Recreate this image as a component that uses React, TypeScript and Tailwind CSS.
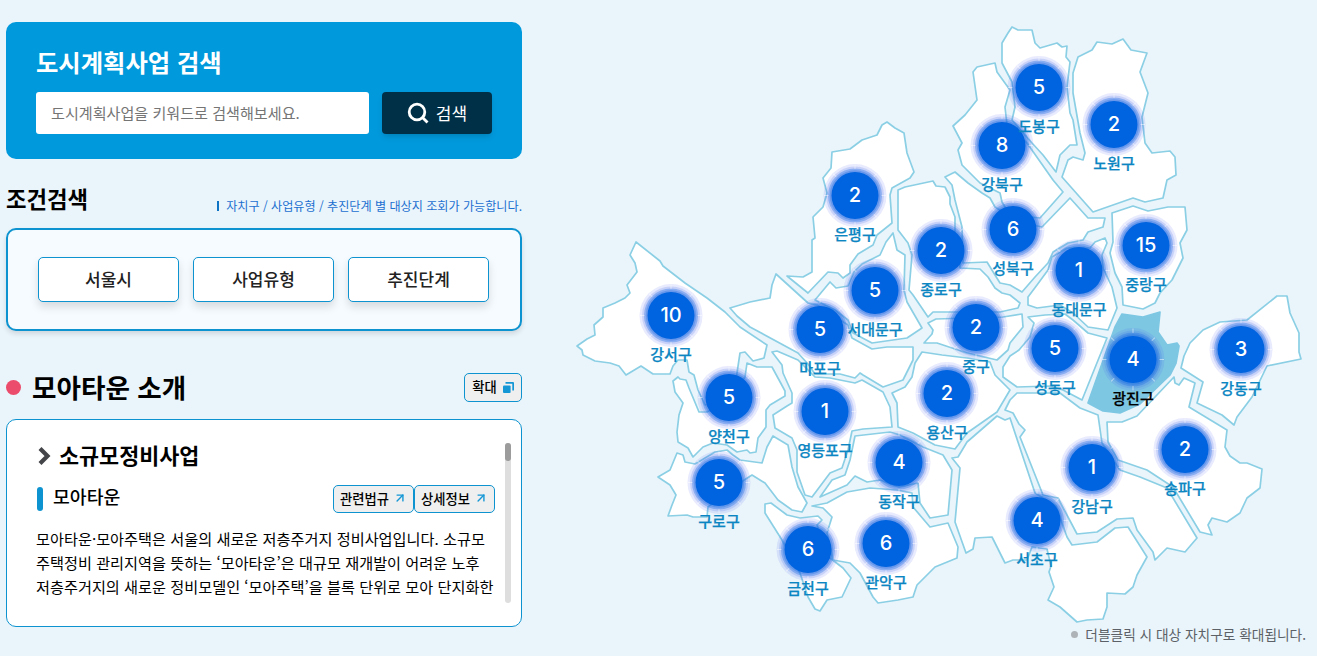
import { ArrowUpRight } from 'lucide-react'

interface District {
  name: string
  count: number
  x: number
  y: number
  points: string
  active?: boolean
}

const districts: District[] = [
  { name: '강서구', count: 10, x: 671, y: 315, points: '636,242 660,261 663,266 685,283 707,298 725,312 740,327 767,345 764,358 753,361 745,352 740,353 737,373 735,385 720,400 705,405 698,390 694,375 689,372 687,360 678,360 673,366 670,374 653,374 641,366 626,375 619,366 610,363 595,361 583,355 582,350 577,346 587,339 595,335 594,325 603,317 603,308 615,303 625,298 630,293 627,285 637,272 635,263 630,255' },
  { name: '양천구', count: 5, x: 729, y: 397, points: '673,381 678,377 680,379 686,380 689,388 699,412 707,412 730,400 745,377 747,363 757,367 772,367 785,391 785,396 770,405 766,410 766,427 758,438 756,452 750,453 747,450 737,452 727,445 713,443 703,447 693,457 688,448 678,442 677,432 679,415 683,403 675,392' },
  { name: '구로구', count: 5, x: 719, y: 482, points: '677,453 683,455 685,462 695,464 705,458 715,452 727,450 733,455 740,460 762,463 767,447 773,436 788,445 792,467 798,487 807,503 802,512 792,510 778,500 765,483 752,475 735,486 708,507 707,517 693,517 687,515 668,516 672,505 676,495 670,485 658,477 670,470' },
  { name: '영등포구', count: 1, x: 825, y: 411, points: '772,352 777,351 798,360 808,370 815,377 830,378 855,383 862,380 883,392 890,407 892,427 863,429 852,431 848,450 842,468 830,473 812,497 805,495 797,472 797,450 792,438 775,428 773,415 787,406 792,403 792,393 783,373 782,365' },
  { name: '마포구', count: 5, x: 820, y: 329, points: '730,308 750,302 770,298 772,285 776,274 808,303 817,305 848,325 852,338 872,349 887,347 913,347 913,360 903,380 883,387 863,375 860,373 855,378 840,374 815,374 808,364 798,353 750,327 737,316' },
  { name: '서대문구', count: 5, x: 875, y: 290, points: '815,300 830,282 836,288 848,286 854,272 862,264 880,255 886,242 893,233 897,250 905,255 904,290 907,302 922,328 907,338 872,343 853,333 848,320 835,310' },
  { name: '은평구', count: 2, x: 855, y: 195, points: '882,125 887,122 895,128 904,133 907,153 914,172 910,178 892,188 890,195 892,223 877,235 873,245 858,254 850,265 850,273 843,278 838,273 828,272 808,293 787,276 803,277 812,272 812,240 815,238 813,217 823,207 827,193 823,178 831,168 832,152 850,149 862,140 877,135' },
  { name: '종로구', count: 2, x: 941, y: 250, points: '898,190 905,187 933,181 936,186 945,187 950,197 950,204 955,217 955,233 959,250 960,268 980,269 988,277 995,288 1002,293 1010,295 1020,303 1018,308 1000,312 953,312 933,312 928,317 913,295 909,290 912,255 908,243 898,230' },
  { name: '중구', count: 2, x: 976, y: 327, points: '933,330 928,323 936,319 1003,317 1022,314 1023,327 1010,343 1008,350 997,360 967,353 943,345 937,343 924,343 932,334' },
  { name: '용산구', count: 2, x: 947, y: 393, points: '922,352 942,355 967,358 990,362 995,375 1010,390 997,412 967,433 955,449 935,445 913,433 898,427 897,403 892,393 905,387 912,377 915,363' },
  { name: '성동구', count: 5, x: 1055, y: 348, points: '1028,317 1045,315 1065,314 1073,320 1088,333 1107,338 1082,400 1063,390 1050,386 1017,387 1003,377 1003,367 1010,356 1019,350 1030,337 1034,323' },
  { name: '동대문구', count: 1, x: 1079, y: 270, points: '1028,297 1037,285 1048,270 1052,257 1067,248 1090,248 1095,242 1105,238 1107,243 1102,255 1103,268 1112,287 1117,308 1108,330 1088,327 1073,313 1060,305 1037,308 1028,305' },
  { name: '성북구', count: 6, x: 1013, y: 229, points: '945,177 955,172 968,183 982,193 990,198 995,207 1018,222 1042,227 1070,198 1088,218 1105,218 1103,227 1088,232 1083,240 1068,243 1053,252 1048,263 1035,277 1022,292 1010,285 1000,283 995,275 987,262 963,263 962,227 955,200 952,185' },
  { name: '강북구', count: 8, x: 1002, y: 145, points: '977,67 995,63 997,72 1010,90 1005,107 1007,125 1027,143 1053,180 1063,192 1040,218 1010,215 1002,202 1000,193 980,183 962,165 958,150 962,143 953,126 965,115 977,100 973,72' },
  { name: '도봉구', count: 5, x: 1039, y: 87, points: '1012,27 1018,30 1032,30 1035,43 1040,48 1057,43 1062,47 1067,46 1066,57 1070,62 1067,87 1070,113 1073,120 1077,145 1070,145 1060,155 1056,172 1043,155 1032,143 1012,120 1015,107 1012,82 1002,63 1002,43 1008,33' },
  { name: '노원구', count: 2, x: 1114, y: 124, points: '1097,42 1112,44 1123,39 1131,50 1147,53 1140,72 1148,93 1142,117 1145,143 1152,153 1170,151 1175,157 1176,175 1167,180 1163,198 1145,202 1133,198 1093,212 1062,177 1068,160 1073,157 1083,160 1085,153 1080,133 1073,93 1073,73 1078,57 1092,50' },
  { name: '중랑구', count: 15, x: 1146, y: 245, points: '1112,213 1133,206 1148,211 1168,207 1185,207 1187,230 1180,243 1183,258 1172,280 1160,293 1155,303 1143,309 1123,305 1122,287 1115,273 1110,253 1113,242' },
  { name: '광진구', count: 4, x: 1133, y: 359, active: true, points: '1122,314 1143,317 1160,312 1158,332 1167,345 1177,343 1179,346 1176,363 1170,375 1140,404 1120,413 1103,411 1088,403 1115,327' },
  { name: '강동구', count: 3, x: 1241, y: 349, points: '1277,296 1287,296 1290,313 1299,333 1299,352 1301,359 1267,366 1252,397 1237,417 1234,425 1222,415 1197,403 1203,382 1181,368 1184,356 1190,343 1203,330 1220,322 1247,320' },
  { name: '송파구', count: 2, x: 1185, y: 449, points: '1174,377 1175,383 1179,385 1184,378 1195,383 1189,407 1227,430 1225,447 1230,456 1240,463 1247,463 1262,469 1260,488 1247,498 1240,513 1227,522 1212,518 1208,525 1212,535 1200,532 1173,487 1147,470 1118,460 1108,442 1107,422 1122,422 1137,416' },
  { name: '강남구', count: 1, x: 1092, y: 467, points: '1017,393 1060,393 1080,408 1098,415 1102,443 1120,470 1140,477 1167,488 1197,538 1185,552 1167,548 1155,560 1153,552 1137,530 1133,518 1117,519 1097,532 1077,534 1068,517 1058,498 1043,495 1020,437 1025,430 1019,424 1013,413 1005,410 1010,400' },
  { name: '서초구', count: 4, x: 1037, y: 520, points: '997,416 1005,420 1010,418 1035,493 1056,506 1067,537 1072,545 1097,542 1115,528 1128,527 1147,557 1137,575 1133,587 1125,594 1107,593 1107,607 1103,619 1087,620 1077,622 1060,607 1048,600 1054,587 1049,572 1051,566 1047,549 1032,547 1027,560 1013,560 1005,563 992,537 975,538 973,549 966,553 955,522 960,468 952,458 958,457 967,442' },
  { name: '동작구', count: 4, x: 899, y: 462, points: '855,436 890,432 900,435 923,447 943,455 952,470 948,515 930,518 920,503 918,483 899,487 880,480 867,482 855,476 847,485 820,497 832,480 845,475 850,460' },
  { name: '관악구', count: 6, x: 886, y: 543, points: '812,506 827,503 847,492 870,488 897,490 912,493 913,507 930,527 948,523 958,547 957,558 935,567 917,585 913,597 898,600 878,603 873,597 860,573 850,563 833,560 827,533 832,517 823,508' },
  { name: '금천구', count: 6, x: 808, y: 549, points: '765,504 771,503 787,515 800,518 818,516 822,520 817,525 830,558 843,568 851,578 842,597 827,600 820,611 815,609 808,597 800,573 782,540 765,513' },
]

const ticks = [0, 45, 90, 135, 180, 225, 270, 315]

function SeoulMap() {
  return (
    <svg viewBox="0 0 795 656" className="absolute inset-0 h-full w-full">
      <g transform="translate(-522 0)">
        {districts.map((d) => (
          <polygon
            key={d.name}
            points={d.points}
            fill={d.active ? '#7dc7e3' : '#ffffff'}
            stroke={d.active ? '#7dc7e3' : '#8bcfe5'}
            strokeWidth="1.7"
            strokeLinejoin="round"
          />
        ))}
        {districts.map((d) => (
          <g key={d.name} transform={`translate(${d.x} ${d.y + 0.5})`}>
            <circle r="31.5" fill="#4a5ff0" fillOpacity="0.13" />
            <circle r="29" fill="#3a6cea" fillOpacity="0.18" />
            <circle r="27" fill="#1f6ce2" fillOpacity="0.36" />
            <circle r="25.2" fill="#1268e0" fillOpacity="0.3" />
            {ticks.map((angle) => (
              <path key={angle} d="M0 -31V-26.5" stroke="#fff" strokeOpacity="0.5" strokeWidth="1" transform={`rotate(${angle})`} />
            ))}
            <circle r="23.5" fill="#0063df" />
          </g>
        ))}
      </g>
    </svg>
  )
}

function DistrictMarker({ district }: { district: District }) {
  return (
    <div
      className="absolute flex w-20 -translate-x-1/2 flex-col items-center"
      style={{ left: district.x - 522, top: district.y - 14 }}
    >
      <span className="font-['Inter','Noto_Sans_CJK_KR',sans-serif] text-[20px] leading-7 font-medium text-white">
        {district.count}
      </span>
      <span
        className={`mt-[14px] text-[15px] leading-[22px] font-medium whitespace-nowrap [-webkit-text-stroke:0.25px_currentColor] ${district.active ? 'text-black' : 'text-[#0c86c2]'}`}
      >
        {district.name}
      </span>
    </div>
  )
}

function LinkButton({ label }: { label: string }) {
  return (
    <button className="flex h-7 w-[81px] items-center justify-between rounded-[5px] border border-[#0d93cf] bg-[#efefef] pr-1.5 pl-1.5 text-[13.3px] font-medium whitespace-nowrap text-black">
      {label}
      <ArrowUpRight className="mb-0.5 size-3.5 text-[#1597d5]" strokeWidth={2.4} />
    </button>
  )
}

export default function App() {
  return (
    <div lang="ko" className="flex h-[656px] w-[1317px] overflow-hidden bg-[#eaf5fb] font-['Noto_Sans_CJK_KR',sans-serif] text-black">
      <div className="flex w-[522px] flex-col pt-[22px] pl-1.5">
        <section className="h-[137px] rounded-[10px] bg-[#0099dc] px-[30px] pt-[22px]">
          <h2 className="text-[24.3px] leading-9 font-bold text-white">도시계획사업 검색</h2>
          <div className="mt-3 flex gap-[13px]">
            <input
              className="h-[42px] w-[333px] rounded-[3px] bg-white px-[15px] pb-0.5 text-[15.1px] placeholder:text-[#757575]"
              placeholder="도시계획사업을 키워드로 검색해보세요."
            />
            <button className="flex h-[42px] w-[110px] items-center justify-center gap-[7px] rounded-[4px] bg-[#003047] text-[17px] text-white shadow-md">
              <svg viewBox="0 0 22 22" className="size-[22px]" fill="none" stroke="currentColor" strokeWidth="2.8">
                <circle cx="10" cy="10" r="7.8" />
                <path d="M15.5 15.5L20.5 20.5" />
              </svg>
              <span>검색</span>
            </button>
          </div>
        </section>

        <div className="mt-[21px] flex h-9 items-start justify-between">
          <h2 className="text-[22.3px] leading-9 font-bold">조건검색</h2>
          <p className="mt-[16px] flex items-center gap-[7px] text-[12.1px] leading-5 text-[#1b6fd0]">
            <span className="h-[10px] w-0.5 bg-[#0f74c4]" />
            자치구 / 사업유형 / 추진단계 별 대상지 조회가 가능합니다.
          </p>
        </div>

        <section className="mt-[12px] flex h-[103px] gap-3.5 rounded-[10px] border-2 border-[#0d93cf] bg-[#f5fbff] px-[30px] pt-[27px] shadow-[0_3px_5px_rgba(0,0,0,0.12)]">
          {['서울시', '사업유형', '추진단계'].map((label) => (
            <button
              key={label}
              className="h-[45px] w-[141px] rounded-[5px] border border-[#0d93cf] bg-white pb-0.5 text-[17px] font-medium text-[#222] shadow-[0_5px_8px_rgba(0,0,0,0.13)]"
            >
              {label}
            </button>
          ))}
        </section>

        <div className="mt-[34px] flex h-11 items-center justify-between">
          <h2 className="flex items-center gap-[11px] text-[26.6px] leading-10 font-bold">
            <span className="size-[15px] rounded-full bg-[#eb4c6b]" />
            모아타운 소개
          </h2>
          <button className="flex h-[29px] w-[58px] items-center justify-center gap-1.5 rounded-[5px] border border-[#0d93cf] bg-[#efefef] text-[13.3px] font-medium">
            확대
            <svg viewBox="0 0 11 11" className="size-[11px]" fill="#1597d5">
              <rect y="3.4" width="7.6" height="7.6" rx="1" />
              <path d="M2.5 0H10Q11 0 11 1V8.5H9.3V1.7H2.5Z" />
            </svg>
          </button>
        </div>

        <section className="mt-2.5 flex h-[208px] justify-between rounded-[10px] border border-[#0d93cf] bg-white pt-[23px] pr-[10px] pl-[30px]">
          <div className="w-[458px]">
            <h3 className="flex h-[26px] items-center gap-2 text-[21.8px] leading-[26px] font-bold">
              <svg viewBox="0 0 14 18" className="h-[18px] w-3.5" fill="none" stroke="#434549" strokeWidth="4.2">
                <path d="M3 1.5L10.5 9L3 16.5" />
              </svg>
              <span className="-mt-[3px]">소규모정비사업</span>
            </h3>
            <div className="mt-4 flex h-7 items-center justify-between">
              <h4 className="flex items-center gap-2.5 text-[18.3px] leading-6 font-medium">
                <span className="h-6 w-1.5 rounded-[3px] bg-[#0d93cf]" />
                <span className="-mt-[6px]">모아타운</span>
              </h4>
              <div className="flex">
                <LinkButton label="관련법규" />
                <LinkButton label="상세정보" />
              </div>
            </div>
            <p className="mt-[13px] -ml-px text-[15.2px] leading-6 whitespace-nowrap">
              모아타운·모아주택은 서울의 새로운 저층주거지 정비사업입니다. 소규모
              <br />
              주택정비 관리지역을 뜻하는 ‘모아타운’은 대규모 재개발이 어려운 노후
              <br />
              저층주거지의 새로운 정비모델인 ‘모아주택’을 블록 단위로 모아 단지화한
            </p>
          </div>
          <div className="h-[160px] w-1.5 rounded-[3px] bg-[#dedede]">
            <div className="h-[18px] rounded-[3px] bg-[#9c9c9c]" />
          </div>
        </section>
      </div>

      <div className="relative flex-1">
        <SeoulMap />
        {districts.map((d) => (
          <DistrictMarker key={d.name} district={d} />
        ))}
        <p className="absolute right-[11px] bottom-2.5 flex items-center gap-[7px] text-[13.7px] leading-6 text-[#5b6166]">
          <span className="size-[7px] rounded-full bg-[#adb3b7]" />
          더블클릭 시 대상 자치구로 확대됩니다.
        </p>
      </div>
    </div>
  )
}
